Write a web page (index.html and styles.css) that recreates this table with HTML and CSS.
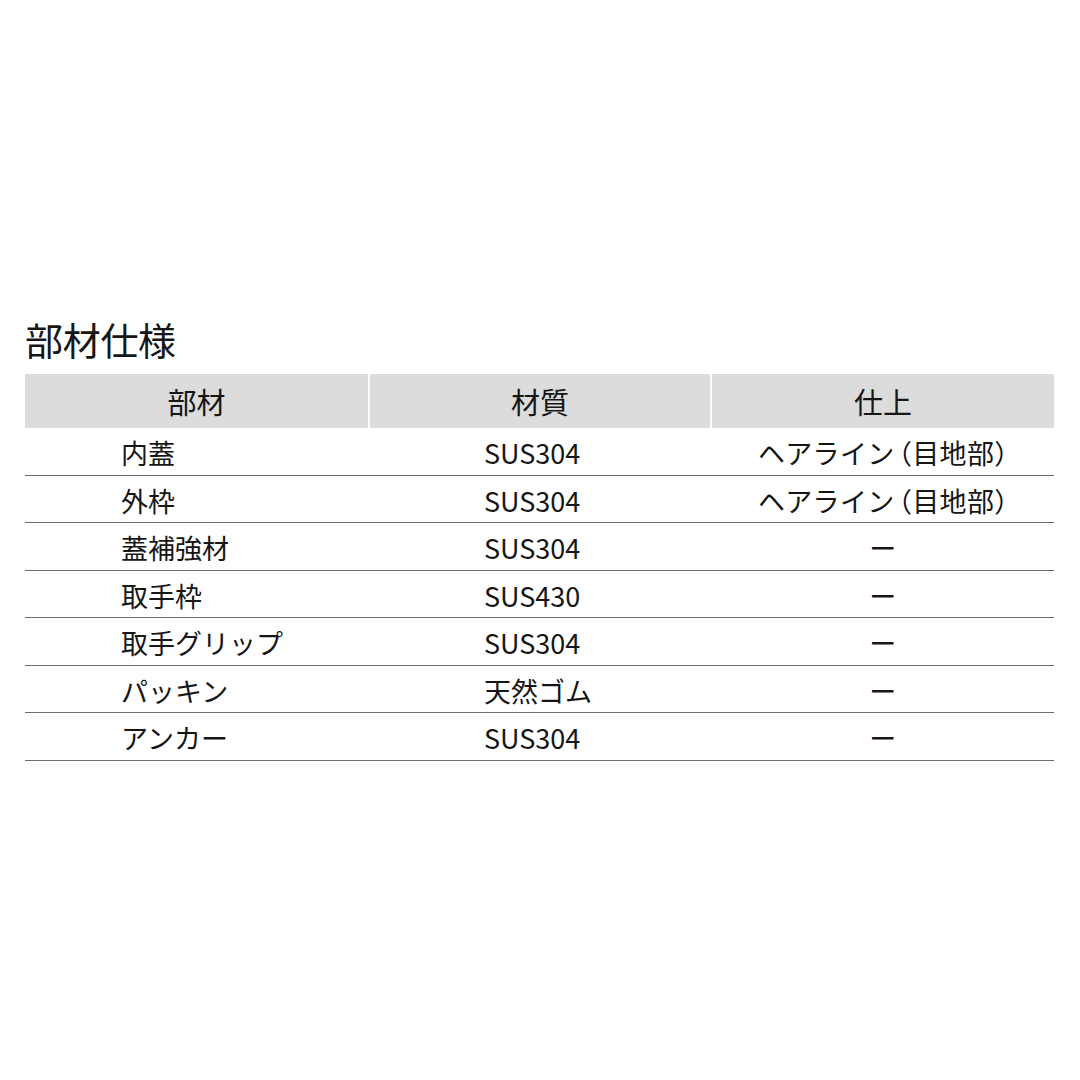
FILE: index.html
```html
<!DOCTYPE html>
<html lang="ja">
<head>
<meta charset="utf-8">
<title>部材仕様</title>
<link rel="stylesheet" href="styles.css">
</head>
<body>
<main class="page">
  <h1 class="title">部材仕様</h1>
  <div class="table">
    <div class="head">
      <div class="hcell">部材</div>
      <div class="hcell">材質</div>
      <div class="hcell">仕上</div>
    </div>
    <div class="row"><div class="c1">内蓋</div><div class="c2">SUS304</div><div class="c3">ヘアライン<span class="paren open">（</span>目地部<span class="paren">）</span></div></div>
    <div class="row"><div class="c1">外枠</div><div class="c2">SUS304</div><div class="c3">ヘアライン<span class="paren open">（</span>目地部<span class="paren">）</span></div></div>
    <div class="row"><div class="c1">蓋補強材</div><div class="c2">SUS304</div><div class="c3">ー</div></div>
    <div class="row"><div class="c1">取手枠</div><div class="c2">SUS430</div><div class="c3">ー</div></div>
    <div class="row"><div class="c1">取手グリップ</div><div class="c2">SUS304</div><div class="c3">ー</div></div>
    <div class="row"><div class="c1">パッキン</div><div class="c2">天然ゴム</div><div class="c3">ー</div></div>
    <div class="row"><div class="c1">アンカー</div><div class="c2">SUS304</div><div class="c3">ー</div></div>
  </div>
</main>
</body>
</html>
```
FILE: styles.css
```css
html, body {
  margin: 0;
  padding: 0;
  background: #ffffff;
}
body {
  width: 1080px;
  height: 1080px;
  font-family: "Noto Sans CJK JP", "Noto Sans", sans-serif;
  color: #161616;
}
.page {
  padding: 316px 26px 0 25px;
}
.title {
  margin: 0 0 12px 0;
  font-size: 38px;
  line-height: 46px;
  font-weight: 400;
  letter-spacing: -0.3px;
}
.table {
  width: 1029px;
}
.head {
  display: grid;
  grid-template-columns: 343px 340px 342px;
  column-gap: 2px;
  height: 54px;
}
.hcell {
  background: #dcdcdc;
  display: flex;
  align-items: center;
  justify-content: center;
  font-size: 29px;
  line-height: 1;
  padding-top: 1px;
}
.row {
  display: grid;
  grid-template-columns: 345px 342px 342px;
  height: 46.5px;
  border-bottom: 1px solid #6e6e6e;
  align-items: center;
  font-size: 27px;
  line-height: 1;
}
.row > div {
  padding-top: 3px;
  white-space: nowrap;
}
.c1 {
  padding-left: 96px;
}
.c2 {
  padding-left: 114px;
}
.c3 {
  text-align: center;
  letter-spacing: 0.3px;
}
.paren {
  font-feature-settings: "halt";
}
.open {
  margin-left: 4px;
}
```
